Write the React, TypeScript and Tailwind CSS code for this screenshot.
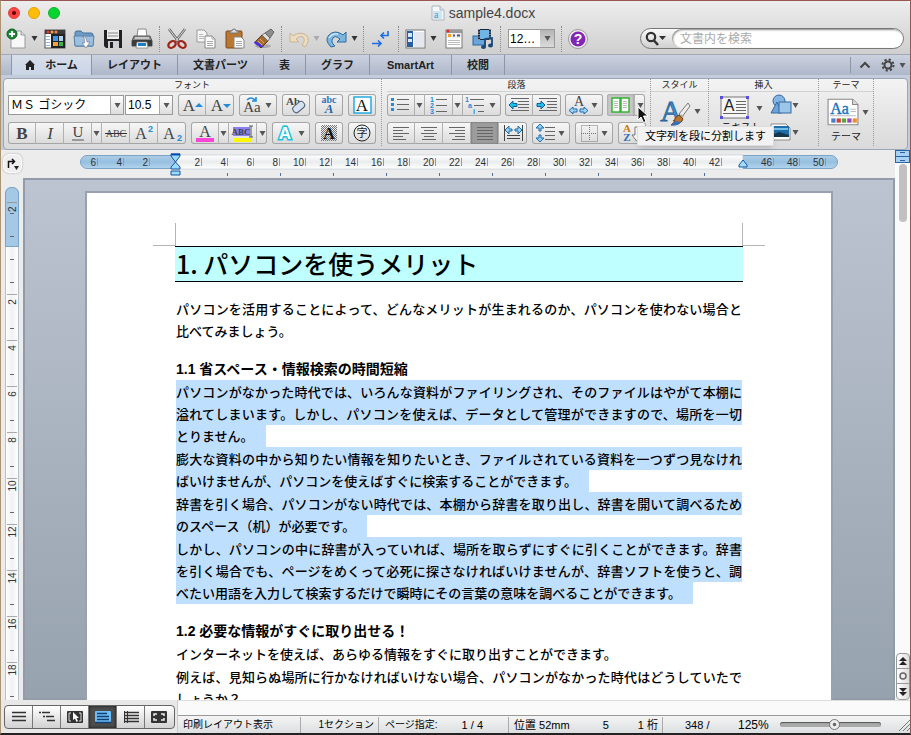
import React from "react";

type Kids = { children?: React.ReactNode };

const UI_FONT = "font-['Liberation_Sans','Noto_Sans_CJK_JP',sans-serif]";

const Arrow = ({ className = "text-[#555]" }: { className?: string }) => (
  <svg width="7" height="5" viewBox="0 0 7 5" className={`shrink-0 ${className}`}>
    <path d="M0.5 0H6.5L3.5 5Z" fill="currentColor" />
  </svg>
);

/* ---------- title bar and main toolbar ---------- */

const TitleBar = () => (
  <div className="relative flex h-6 items-center pl-[7px]">
    <div className="flex gap-2">
      <button aria-label="閉じる" className="flex size-3 items-center justify-center rounded-full border border-[#e0443e] bg-[#fc4447]">
        <span className="size-1 rounded-full bg-[#5a0000]" />
      </button>
      <button aria-label="しまう" className="size-3 rounded-full border border-[#e5a50a] bg-[#fdbc05]" />
      <button aria-label="拡大" className="size-3 rounded-full border border-[#12b32a] bg-[#06d52f]" />
    </div>
    <div className="flex flex-1 items-center justify-center gap-1 pr-[58px] pl-[54px]">
      <svg width="14" height="16" viewBox="0 0 14 16">
        <path d="M1 1H9L13 5V15H1Z" fill="#f7fafc" stroke="#a9b4bb" />
        <path d="M9 1V5H13" fill="#dfe7ec" stroke="#a9b4bb" />
        <rect x="2" y="6" width="9" height="8" fill="#cfe5f2" />
        <text x="3" y="13" fontSize="10" fontFamily="Liberation Serif, serif" fill="#4a9cc8">a</text>
      </svg>
      <h1 className="text-sm leading-5 text-[#444]">sample4.docx</h1>
    </div>
  </div>
);

const Tool = ({ label, children }: Kids & { label: string }) => (
  <button aria-label={label} className="flex h-7 w-[29px] shrink-0 items-center justify-center">
    <svg width="22" height="22" viewBox="0 0 22 22">{children}</svg>
  </button>
);

const More = ({ dim = false }: { dim?: boolean }) => (
  <button aria-label="その他" className="flex h-7 w-[9px] shrink-0 items-center">
    <Arrow className={dim ? "text-[#aaa]" : "text-[#333]"} />
  </button>
);

const Sep = () => (
  <div className="flex w-[6px] shrink-0 justify-center">
    <div className="h-[26px] border-l border-dotted border-[#8a8a8a]" />
  </div>
);

const Toolbar = () => (
  <div className="flex h-[29px] items-center pr-[6px] pb-[2px] pl-px">
    <Tool label="新規">
      <path d="M5 3H15L19 7V20H5Z" fill="#f8f8f8" stroke="#999" />
      <path d="M15 3V7H19" fill="#ddd" stroke="#999" />
      <circle cx="6" cy="6" r="5" fill="#1c8a35" stroke="#0c5a1c" />
      <path d="M6 3V9M3 6H9" stroke="#fff" strokeWidth="2" />
    </Tool>
    <More />
    <Tool label="テンプレート">
      <rect x="1" y="2" width="20" height="18" fill="#fff" stroke="#555" />
      <rect x="1" y="2" width="20" height="4" fill="#3b3b3b" />
      <circle cx="4" cy="4" r="1.5" fill="#e33" /><circle cx="8" cy="4" r="1.5" fill="#ea3" /><circle cx="12" cy="4" r="1.5" fill="#e85" />
      <path d="M2 8.500H6M2 11.500H6M2 14.500H6M2 17.500H6" stroke="#9cb3d0" />
      <rect x="7" y="6" width="14" height="14" fill="#222" />
      <rect x="9" y="8" width="5" height="5" fill="#3f97e8" /><rect x="15" y="8" width="4" height="5" fill="#a8d4f5" />
      <rect x="9" y="14" width="5" height="4" fill="#f3a43a" /><rect x="15" y="14" width="4" height="4" fill="#3cb44b" />
    </Tool>
    <Tool label="開く">
      <path d="M2 5Q2 3 4 3H8L10 5H18Q20 5 20 7V17Q20 18 19 18H3Q2 18 2 17Z" fill="#6f9cc4" stroke="#416f98" />
      <path d="M1 8H21L20 18H2Z" fill="#9cc0de" stroke="#5583ab" />
      <path d="M10 8Q14 9 14 14H17L13 20L9 15H11.500Q12 11 10 8Z" fill="#fff" stroke="#668" strokeWidth=".6" />
    </Tool>
    <Tool label="保存">
      <path d="M2 2H20V20H4L2 18Z" fill="#222" />
      <rect x="5" y="2" width="12" height="9" fill="#eee" />
      <path d="M6 5H16M6 8H16" stroke="#888" />
      <rect x="6" y="13" width="11" height="7" fill="#ccd0d4" /><rect x="8" y="14" width="3" height="6" fill="#222" />
    </Tool>
    <Tool label="プリント">
      <path d="M6 9L7 1H15L16 9Z" fill="#fff" stroke="#888" />
      <path d="M3 8H19L21 13V18H1V13Z" fill="#8c8c8c" stroke="#555" />
      <rect x="1" y="12" width="20" height="6" rx="1" fill="#3c3c3c" />
      <path d="M4 10H18" stroke="#ddd" strokeWidth="1.500" />
      <path d="M6 14H16L17 20H5Z" fill="#fff" stroke="#777" strokeWidth=".7" /><path d="M7 15H15V18H7Z" fill="#1b80c8" />
    </Tool>
    <Sep />
    <Tool label="カット">
      <path d="M3 1L13 14M19 1L9 14" stroke="#666" strokeWidth="2.600" />
      <path d="M3 1L13 14M19 1L9 14" stroke="#ddd" strokeWidth="1" />
      <ellipse cx="6" cy="16.500" rx="4" ry="3" transform="rotate(-35 6 16.500)" fill="none" stroke="#a02318" strokeWidth="2.200" />
      <ellipse cx="16" cy="16.500" rx="4" ry="3" transform="rotate(35 16 16.500)" fill="none" stroke="#a02318" strokeWidth="2.200" />
    </Tool>
    <Tool label="コピー">
      <path d="M2 2H9L12 5V14H2Z" fill="#f6f6f6" stroke="#999" /><path d="M4 6.500H8M4 8.500H9M4 10.500H9" stroke="#bbb" />
      <path d="M10 8H17L20 11V20H10Z" fill="#fafafa" stroke="#888" /><path d="M17 8V11H20M12 13.500H18M12 15.500H18M12 17.500H18" fill="none" stroke="#aaa" />
    </Tool>
    <Tool label="ペースト">
      <rect x="2" y="3" width="16" height="17" rx="1" fill="#b9772f" stroke="#7c4a15" />
      <path d="M6 5V3H8Q8 1 10 1Q12 1 12 3H14V5Z" fill="#ddd" stroke="#777" />
      <path d="M10 9H17L20 12V20H10Z" fill="#fafafa" stroke="#888" /><path d="M12 13.500H18M12 15.500H18M12 17.500H18" stroke="#aaa" />
    </Tool>
    <Tool label="書式のコピー">
      <ellipse cx="10" cy="18" rx="8" ry="2" fill="#aaa" />
      <path d="M2 14L8 20L15 13L9 7Z" fill="#a3692d" stroke="#5f3b14" />
      <path d="M2 13L1 15Q6 20 11 19L6 15Z" fill="#4a36d6" />
      <path d="M9 7L15 13L17 10L12 5Z" fill="#ddd" stroke="#777" />
      <path d="M12 5L18 1L21 4L17 10Z" fill="#8d8d8d" stroke="#666" />
      <path d="M5 13L9 17M7 11L11 15" stroke="#e0ae6d" />
    </Tool>
    <Sep />
    <Tool label="取り消し">
      <path d="M2 5V14H11L8 11Q12 7 15 9Q18 12 14 17L17 19Q23 12 18 7Q12 3 5 8Z" fill="#eddcc2" stroke="#c9b594" />
    </Tool>
    <More dim />
    <Tool label="やり直し">
      <path d="M20 4V14H11L14 11Q9 7 7 10Q4 14 9 18L5 19Q-2 12 3 7Q9 1 17 7Z" fill="#7db7e0" stroke="#2c6a9f" />
      <path d="M3 10Q6 5 12 6" stroke="#d5ecfb" fill="none" strokeWidth="1.300" />
    </Tool>
    <More />
    <Sep />
    <Tool label="編集記号">
      <path d="M18 3V7.500H11M14 4.500L11 7.500L14 10.500" fill="none" stroke="#1b6fe0" strokeWidth="1.600" />
      <path d="M2 15.500H11M8 12.500L11 15.500L8 18.500" fill="none" stroke="#1b6fe0" strokeWidth="1.600" />
    </Tool>
    <Sep />
    <Tool label="サイドバー">
      <rect x="1" y="2" width="19" height="18" fill="#fff" stroke="#777" />
      <rect x="2" y="3" width="6" height="16" fill="#2a5ea4" />
      <path d="M3 5H7V9H3ZM3 11H7V14H3Z" fill="#d8e8fa" /><rect x="9" y="4" width="10" height="15" fill="#e4e7f0" />
    </Tool>
    <More />
    <Tool label="ツールボックス">
      <rect x="3" y="2" width="16" height="18" fill="#fff" stroke="#777" />
      <rect x="3" y="2" width="16" height="3" fill="#999" /><circle cx="5" cy="3" r="1.500" fill="#e22" />
      <rect x="4" y="5" width="14" height="5" fill="#eee" /><rect x="5" y="6" width="3" height="3" fill="#f4a020" />
      <path d="M10 7.500H12M14 7.500H17" stroke="#558" strokeWidth="2" />
      <path d="M5 12.500H17M5 14.500H17M5 16.500H17" stroke="#bbb" />
    </Tool>
    <Tool label="メディア">
      <rect x="1" y="8" width="12" height="9" fill="#69a5da" stroke="#2b659e" />
      <rect x="6" y="1" width="13" height="11" fill="#182433" /><rect x="8" y="2" width="9" height="9" fill="#6fb5e6" />
      <path d="M7 1V12M18 1V12" stroke="#fff" strokeDasharray="1 1.500" />
      <path d="M13 19V11L20 10V17" fill="none" stroke="#1c4878" strokeWidth="1.800" />
      <ellipse cx="11.500" cy="19" rx="2.500" ry="2" fill="#1c4878" /><ellipse cx="18.500" cy="17.500" rx="2.500" ry="2" fill="#1c4878" />
    </Tool>
    <Sep />
    <div className="relative mr-[3px] ml-[5px] shrink-0">
      <select aria-label="ズーム" className="block h-[19px] w-[47px] appearance-none border border-[#999] bg-white pl-px text-xs leading-4 text-black">
        <option>12…</option>
      </select>
      <span className="pointer-events-none absolute top-px right-px flex h-[17px] w-[14px] items-center justify-center bg-gradient-to-b from-[#b5b5b5] to-[#dadada]"><Arrow /></span>
    </div>
    <Sep />
    <Tool label="ヘルプ">
      <circle cx="10" cy="11" r="9.500" fill="#eee" stroke="#999" />
      <circle cx="10" cy="11" r="7.500" fill="#8226b5" />
      <text x="10" y="16" textAnchor="middle" fontSize="14" fontWeight="700" fontFamily="Liberation Sans, sans-serif" fill="#fff">?</text>
    </Tool>
    <div className="ml-auto flex h-[21px] w-[264px] overflow-hidden rounded-full border border-[#777] bg-gradient-to-b from-[#fafafa] to-[#d0d0d0]">
      <button aria-label="検索オプション" className="flex w-[31px] shrink-0 items-center pl-1">
        <svg width="22" height="16" viewBox="0 0 22 16">
          <circle cx="6" cy="6" r="4.200" fill="none" stroke="#333" strokeWidth="2.200" />
          <path d="M9 9.500L13 14" stroke="#333" strokeWidth="2.600" /><path d="M14 5H21L17.500 9Z" fill="#333" />
        </svg>
      </button>
      <input type="search" aria-label="文書内を検索" placeholder="文書内を検索" className="min-w-0 flex-1 rounded-full bg-white pl-2 text-xs shadow-[inset_1px_1px_2px_#888] outline-none placeholder:text-[#aaa]" />
    </div>
  </div>
);

/* ---------- ribbon tabs ---------- */

const TABS = [
  { name: "レイアウト", width: "w-[86px]" },
  { name: "文書パーツ", width: "w-[86px]" },
  { name: "表", width: "w-[42px]" },
  { name: "グラフ", width: "w-[64px]" },
  { name: "SmartArt", width: "w-[82px]" },
  { name: "校閲", width: "w-[53px]" },
];

const Tabs = () => (
  <nav className="flex h-[21px] border-t border-[#a3a8b2] bg-gradient-to-b from-[#cbd1df] to-[#aeb7c9] text-[11px] leading-5 font-bold text-[#222]">
    <div className="w-[11px] border-r border-[#8d96a6]" />
    <button className="flex w-20 items-center justify-center gap-[10px] border-r border-[#8d96a6] bg-gradient-to-b from-[#d8dfeb] to-[#c9d4e5]">
      <svg width="10" height="10" viewBox="0 0 10 10"><path d="M5 0L10 5H9V10H6V7H4V10H1V5H0Z" fill="#222" /></svg>
      ホーム
    </button>
    {TABS.map((t) => (
      <button key={t.name} className={`${t.width} border-r border-[#8d96a6]`}>{t.name}</button>
    ))}
    <div className="ml-auto flex items-center">
      <div className="h-4 border-l border-[#8d96a6]" />
      <button aria-label="リボンを隠す" className="ml-2">
        <svg width="12" height="8" viewBox="0 0 12 8"><path d="M1.500 6.500L6 2L10.500 6.500" fill="none" stroke="#444" strokeWidth="2" /></svg>
      </button>
      <button aria-label="リボンの設定" className="mr-1 ml-[10px] flex items-center gap-1">
        <svg width="14" height="14" viewBox="0 0 14 14">
          <circle cx="7" cy="7" r="3.500" fill="none" stroke="#444" strokeWidth="2" />
          <circle cx="7" cy="7" r="5.500" fill="none" stroke="#444" strokeWidth="2" strokeDasharray="2.200 2.120" />
        </svg>
        <Arrow />
      </button>
    </div>
  </nav>
);

/* ---------- ribbon ---------- */

const Group = ({ title, className = "", children }: Kids & { title: string; className?: string }) => (
  <section className={`shrink-0 border-r border-dotted border-[#999] ${className}`}>
    <h2 className="mb-[2px] h-[13px] border-b border-[#d2d2d2] text-center text-[9px] leading-3 text-[#222]">{title}</h2>
    {children}
  </section>
);

const Bar = ({ children }: Kids) => (
  <div className="flex h-[22px] shrink-0 overflow-hidden rounded-[3px] bg-gradient-to-b from-[#f8f8f8] to-[#dadada] shadow-[inset_0_0_0_1px_#a5a5a5]">
    {children}
  </div>
);

const Btn = ({ label, tone = "", children }: Kids & { label: string; tone?: string }) => (
  <button aria-label={label} className={`flex w-7 items-center justify-center border-r border-[#b0b0b0] last:border-r-0 ${tone}`}>
    <svg width="26" height="20" viewBox="0 0 26 20">{children}</svg>
  </button>
);

const Drop = () => (
  <button aria-label="メニュー" className="flex w-[10px] items-center justify-center border-r border-[#b0b0b0] last:border-r-0"><Arrow /></button>
);

const Wide = ({ label, children }: Kids & { label: string }) => (
  <button aria-label={label} className="flex w-[38px] items-center justify-center gap-px pr-1">
    <svg width="24" height="20" viewBox="0 0 24 20">{children}</svg>
    <Arrow />
  </button>
);

const Glyph = ({ x = 13, y = 16, size = 17, fill = "#444", bold = false, italic = false, children }: Kids & { x?: number; y?: number; size?: number; fill?: string; bold?: boolean; italic?: boolean }) => (
  <text x={x} y={y} fontSize={size} fill={fill} textAnchor="middle" fontFamily="Liberation Serif, serif" fontWeight={bold ? 700 : 400} fontStyle={italic ? "italic" : "normal"}>
    {children}
  </text>
);

const Combo = ({ label, value, className }: { label: string; value: string; className: string }) => (
  <div className={`relative shrink-0 ${className}`}>
    <select aria-label={label} className="block h-5 w-full appearance-none border border-[#999] bg-white pl-[2px] text-xs leading-4 text-black">
      <option>{value}</option>
    </select>
    <span className="pointer-events-none absolute top-px right-px flex h-[18px] w-[13px] items-center justify-center border-l border-[#aaa] bg-gradient-to-b from-white to-[#ddd]"><Arrow /></span>
  </div>
);

const Rows = ({ d, stroke = "#666" }: { d: string; stroke?: string }) => <path d={d} stroke={stroke} fill="none" strokeWidth="1" />;

const FontGroup = () => (
  <Group title="フォント" className="pr-[5px] pl-1">
    <div className="flex items-center gap-[5px]">
      <div className="flex gap-px">
        <Combo label="フォント名" value="ＭＳ ゴシック" className="w-[116px]" />
        <Combo label="フォントサイズ" value="10.5" className="w-12" />
      </div>
      <Bar>
        <Btn label="拡大"><Glyph x={10}>A</Glyph><path d="M16 12H24L20 8Z" fill="#258bd8" /></Btn>
        <Btn label="縮小"><Glyph x={10}>A</Glyph><path d="M16 9H24L20 13Z" fill="#258bd8" /></Btn>
      </Bar>
      <Bar>
        <Wide label="文字種の変換"><Glyph x={12} y={17} size={15}>Aa</Glyph><path d="M7 5Q11 1 15 5M16 2V6H12" fill="none" stroke="#258bd8" strokeWidth="1.600" /></Wide>
      </Bar>
      <Bar>
        <Btn label="書式のクリア">
          <Glyph x={10} y={10} size={11} bold>Ab</Glyph>
          <rect x="9" y="9" width="13" height="7" rx="3" transform="rotate(-40 15 12)" fill="#d7e3f2" stroke="#567" />
        </Btn>
      </Bar>
      <Bar>
        <Btn label="ルビ"><Glyph y={8} size={10} bold fill="#2c74b8">abc</Glyph><Glyph y={18} size={13} bold italic fill="#2b65a3">A</Glyph></Btn>
      </Bar>
      <Bar>
        <Btn label="囲み線"><rect x="5" y="2" width="17" height="16" fill="#fff" stroke="#18a5df" strokeWidth="1.400" /><Glyph size={17} fill="#111">A</Glyph></Btn>
      </Bar>
    </div>
    <div className="mt-[6px] flex gap-[5px]">
      <Bar>
        <Btn label="太字"><Glyph bold>B</Glyph></Btn>
        <Btn label="斜体"><Glyph italic>I</Glyph></Btn>
        <Btn label="下線"><Glyph y={14} size={15}>U</Glyph><path d="M7 17H19" stroke="#555" /></Btn>
        <Drop />
        <Btn label="取り消し線"><Glyph y={14} size={10}>ABC</Glyph><path d="M2 10.500H24" stroke="#333" /></Btn>
        <Btn label="上付き"><Glyph x={10} size={16}>A</Glyph><text x="17" y="9" fontSize="9" fontWeight="700" fill="#258bd8">2</text></Btn>
        <Btn label="下付き"><Glyph x={10} size={16}>A</Glyph><text x="18" y="18" fontSize="9" fontWeight="700" fill="#258bd8">2</text></Btn>
      </Bar>
      <Bar>
        <Btn label="文字の色"><Glyph y={14} size={16}>A</Glyph><rect x="4" y="15" width="18" height="4" fill="#f845d8" /></Btn>
        <Drop />
        <Btn label="蛍光ペン"><rect x="3" y="4" width="17" height="9" fill="#8880ee" /><Glyph x={11} y={12} size={9} bold>ABC</Glyph><path d="M21 3V14M19 3H23M19 14H23" stroke="#555" /><rect x="4" y="15" width="18" height="4" fill="#fcf800" /></Btn>
        <Drop />
      </Bar>
      <Bar>
        <Wide label="文字の効果">
          <text x="12" y="16" textAnchor="middle" fontSize="17" fontWeight="700" fill="#fff" stroke="#19c3dd" strokeWidth="3" paintOrder="stroke">A</text>
        </Wide>
      </Bar>
      <Bar>
        <Btn label="網かけ">
          <pattern id="dither" width="2" height="2" patternUnits="userSpaceOnUse"><rect width="1" height="1" fill="#777" /><rect x="1" y="1" width="1" height="1" fill="#777" /></pattern>
          <rect x="5" y="2" width="16" height="16" fill="url(#dither)" /><Glyph size={16} bold fill="#111">A</Glyph>
        </Btn>
      </Bar>
      <Bar>
        <Btn label="囲い文字"><circle cx="13" cy="10" r="8" fill="none" stroke="#222" /><text x="13" y="14" textAnchor="middle" fontSize="11" fill="#222">字</text></Btn>
      </Bar>
    </div>
  </Group>
);

const SIDE_ARROW = "M0 4L4 0V2.500H8V5.500H4V8Z";

const Tooltip = () => (
  <>
    <div role="tooltip" className="absolute top-8 left-[30px] z-20 border border-[#ddd] bg-[#f2f2f2] px-[7px] py-px text-[11px] leading-4 whitespace-nowrap text-black shadow-md">文字列を段に分割します</div>
    <svg width="13" height="18" viewBox="0 0 13 18" className="absolute top-3 left-[30px] z-30">
      <path d="M1 1V14L4 11L6.500 16.500L9 15.500L6.500 10H11Z" fill="#111" stroke="#fff" />
    </svg>
  </>
);

const ParagraphGroup = () => (
  <Group title="段落" className="pr-1 pl-[5px]">
    <div className="flex gap-1">
      <Bar>
        <Btn label="箇条書き"><path d="M3 3H6V6H3ZM3 8H6V11H3ZM3 13H6V16H3Z" fill="#258bd8" /><Rows d="M9 4.500H21M9 9.500H21M9 14.500H21" /></Btn>
        <Drop />
        <Btn label="段落番号">
          <g fontSize="7" fontWeight="700" fill="#258bd8"><text x="4" y="7">1</text><text x="4" y="13">2</text><text x="4" y="19">3</text></g>
          <Rows d="M10 4.500H21M10 10.500H21M10 16.500H21" />
        </Btn>
        <Drop />
        <Wide label="アウトライン">
          <g fontSize="7" fontWeight="700" fill="#258bd8"><text x="1" y="7">1</text><text x="4" y="13">a</text><text x="9" y="19">i</text></g>
          <Rows d="M6 4.500H20M10 10.500H20M14 16.500H20" />
        </Wide>
      </Bar>
      <Bar>
        <Btn label="インデント解除"><Rows d="M5 3.500H23M12 6.500H23M12 9.500H23M12 12.500H23M5 15.500H23" /><path transform="translate(3 6)" d={SIDE_ARROW} fill="#1cc0ea" stroke="#105f9c" /></Btn>
        <Btn label="インデント"><Rows d="M5 3.500H23M13 6.500H23M13 9.500H23M13 12.500H23M5 15.500H23" /><path transform="translate(11 6) scale(-1 1)" d={SIDE_ARROW} fill="#1cc0ea" stroke="#105f9c" /></Btn>
      </Bar>
      <Bar>
        <Wide label="拡張書式">
          <Glyph x={13} y={11} size={14}>A</Glyph>
          <path d="M3 15.500L7 12V14H11V17H7V19ZM22 15.500L18 12V14H14V17H18V19Z" fill="#9fd3f5" stroke="#1f6cae" />
        </Wide>
      </Bar>
      <div className="relative">
        <Bar>
          <Btn label="段組み" tone="bg-[#c6c6c6] shadow-[inset_0_0_2px_#777]">
            <rect x="4" y="3" width="8" height="14" fill="#fff" stroke="#2bb02b" strokeWidth="1.400" /><rect x="13" y="3" width="8" height="14" fill="#fff" stroke="#2bb02b" strokeWidth="1.400" />
            <Rows stroke="#bbb" d="M6 6.500H10M6 8.500H10M6 10.500H10M6 12.500H10M15 6.500H19M15 8.500H19M15 10.500H19M15 12.500H19" />
          </Btn>
          <Drop />
        </Bar>
        <Tooltip />
      </div>
    </div>
    <div className="mt-[6px] flex gap-[5px]">
      <Bar>
        <Btn label="左揃え"><Rows d="M5 4.500H21M5 7.500H15M5 10.500H21M5 13.500H15M5 16.500H18" /></Btn>
        <Btn label="中央揃え"><Rows d="M5 4.500H21M8 7.500H18M5 10.500H21M8 13.500H18M6 16.500H20" /></Btn>
        <Btn label="右揃え"><Rows d="M5 4.500H21M11 7.500H21M5 10.500H21M11 13.500H21M8 16.500H21" /></Btn>
        <Btn label="両端揃え" tone="bg-[#9c9c9c] shadow-[inset_0_0_2px_#555]"><Rows d="M5 4.500H21M5 7.500H21M5 10.500H21M5 13.500H21M5 16.500H21" /></Btn>
        <Btn label="均等割り付け">
          <Rows d="M4.500 2V18M22.500 2V18M7 12.500H20M7 15.500H20" stroke="#444" />
          <path d="M5 7L9 3V6H12V8H9V11ZM22 7L18 3V6H15V8H18V11Z" fill="#8fd0f5" stroke="#1f6cae" />
        </Btn>
      </Bar>
      <Bar>
        <Wide label="行間">
          <path d="M7 1L11 5H8V8H6V5H3ZM7 19L11 15H8V12H6V15H3Z" fill="#8fd0f5" stroke="#1f6cae" />
          <Rows d="M12 4.500H22M12 8.500H22M12 12.500H22M12 16.500H22" />
        </Wide>
      </Bar>
      <Bar>
        <Wide label="罫線"><path d="M5.500 2.500H21.500V18.500H5.500ZM13.500 2V18M5 10.500H21" fill="none" stroke="#777" strokeDasharray="1 1" /></Wide>
      </Bar>
      <Bar>
        <Btn label="並べ替え">
          <Glyph x={8} y={9} size={11} bold fill="#cc7a10">A</Glyph><Glyph x={8} y={18} size={11} bold fill="#2d6db5">Z</Glyph>
          <path d="M16 4H19V12H22L17.500 18L13 12H16Z" fill="#fff" stroke="#777" />
        </Btn>
      </Bar>
    </div>
  </Group>
);

const Ribbon = () => (
  <div className="bg-[#c3ccdb] px-[2px] pt-[3px]">
    <div className="flex h-[72px] overflow-visible rounded-[4px] border border-[#9ba6b7] bg-gradient-to-b from-[#f3f3f3] via-[#e6e6e6] to-[#dadada] pb-[3px]">
      <FontGroup />
      <ParagraphGroup />
      <Group title="スタイル" className="w-[58px]">
        <button aria-label="スタイル" className="flex items-center gap-[2px] pl-2">
          <svg width="33" height="34" viewBox="0 0 33 34">
            <text x="12" y="27" textAnchor="middle" fontSize="30" fontFamily="Liberation Serif, serif" fill="#3f90cf" stroke="#27649c" strokeWidth=".8">A</text>
            <path d="M29 9L20 20L23 23L31 12Z" fill="#eee" stroke="#777" />
            <path d="M22 20L25 23L22 25L20 22Z" fill="#aaa" />
            <path d="M20 21L24 25Q22 31 12 31Q17 28 16 24Z" fill="#bb762c" stroke="#6e4214" /><path d="M12 31Q18 33 22 28L17 27Z" fill="#3470c0" />
          </svg>
          <Arrow />
        </button>
      </Group>
      <Group title="挿入" className="w-[110px]">
        <div className="flex pl-[10px]">
          <div className="w-[51px]">
            <button className="text-[10px] leading-3">
              <span className="flex h-7 items-center gap-[5px]">
                <svg width="32" height="26" viewBox="0 0 32 26">
                  <rect x="2" y="2" width="27" height="21" fill="#f5f5f5" stroke="#777" />
                  <text x="10" y="16" textAnchor="middle" fontSize="16" fill="#222" fontFamily="Liberation Sans">A</text>
                  <Rows d="M17 6.500H27M17 9.500H27M17 12.500H27M17 15.500H27M4 18.500H27" />
                  <path d="M1 1H4V4H1ZM27 1H30V4H27ZM1 21H4V24H1ZM27 21H30V24H27Z" fill="#5550e0" />
                </svg>
                <Arrow />
              </span>
              テキスト
            </button>
          </div>
          <div className="flex flex-col gap-[7px]">
            <button aria-label="図形" className="flex items-center">
              <svg width="22" height="22" viewBox="0 0 22 22">
                <circle cx="9" cy="7" r="6" fill="#84b6e4" stroke="#34699f" /><path d="M1 19L7 8L12 19Z" fill="#6ca3d8" stroke="#34699f" /><rect x="9" y="8" width="12" height="11" fill="#9cc5ea" stroke="#34699f" />
              </svg>
              <Arrow />
            </button>
            <button aria-label="写真" className="flex items-center">
              <svg width="22" height="18" viewBox="0 0 22 18">
                <path d="M1 1H16L20 5V17H1Z" fill="#fff" stroke="#888" /><rect x="2" y="3" width="17" height="11" fill="#1f6ea8" /><path d="M2 12L9 9L19 12V14H2Z" fill="#15384f" /><path d="M2 5H18V7H2Z" fill="#78bde8" />
              </svg>
              <Arrow />
            </button>
          </div>
        </div>
      </Group>
      <Group title="テーマ" className="w-[55px]">
        <button className="w-full text-[10px] leading-3 text-[#222]">
          <span className="flex h-9 items-center gap-[3px] pl-2">
            <svg width="32" height="28" viewBox="0 0 30 26">
              <path d="M1 1H24L29 6V25H1Z" fill="#fff" stroke="#888" /><path d="M24 1V6H29" fill="#ddd" stroke="#888" />
              <text x="3" y="15" fontSize="15" fontFamily="Liberation Serif, serif" fill="#2175bd" stroke="#2175bd" strokeWidth=".4">Aa</text>
              <path d="M22 10.500H27M22 12.500H27M3 16.500H27" stroke="#bbb" />
              <rect x="4" y="19" width="4" height="4" fill="#4a80c8" /><rect x="9" y="19" width="4" height="4" fill="#d04040" /><rect x="14" y="19" width="4" height="4" fill="#5aa83c" /><rect x="19" y="19" width="4" height="4" fill="#8e4cc0" /><rect x="24" y="19" width="4" height="4" fill="#ea9030" />
            </svg>
            <Arrow />
          </span>
          <span className="block pt-px">テーマ</span>
        </button>
      </Group>
    </div>
  </div>
);

/* ---------- rulers ---------- */

const RULER_MARKS = [-6, -4, -2, 2, 4, 6, 8, 10, 12, 14, 16, 18, 20, 22, 24, 26, 28, 30, 32, 34, 36, 38, 40, 42, 46, 48, 50];
const TAB_STOPS = [1, 2, 3, 4, 5, 6, 7, 8, 9, 10];

const Ruler = () => (
  <svg width="758" height="28" viewBox="0 0 758 28" className="shrink-0">
    <defs>
      <linearGradient id="rulerBlue" x2="0" y2="1"><stop stopColor="#aecde6" /><stop offset=".5" stopColor="#96c0e0" /><stop offset="1" stopColor="#b2d4ed" /></linearGradient>
      <linearGradient id="rulerWhite" x2="0" y2="1"><stop stopColor="#fff" /><stop offset=".5" stopColor="#e9eced" /><stop offset="1" stopColor="#fff" /></linearGradient>
    </defs>
    <rect x=".5" y="5.500" width="757" height="13" rx="6.500" fill="url(#rulerBlue)" stroke="#7ba3c4" />
    <rect x="95" y="5" width="568" height="14" fill="url(#rulerWhite)" stroke="#b3bdc5" strokeWidth=".5" />
    {RULER_MARKS.map((n) => (
      <g key={n}>
        <path d={`M${95 + n * 13}.5 8V16`} stroke="#999" />
        <text x={94 + n * 13} y="16" textAnchor="end" fontSize="10" fill="#333">{Math.abs(n)}</text>
      </g>
    ))}
    {TAB_STOPS.map((n) => <path key={n} d={`M${94 + n * 53}.5 23V26`} stroke="#527199" />)}
    <path d="M91 4H100V6L95.500 12L91 6ZM95.500 12L100 17V19H91V17ZM91 21H100V25H91Z" fill="#9bdcfc" stroke="#1554a0" />
    <path d="M91 4.500H100" stroke="#0d4eb0" strokeWidth="2" />
    <path d="M663 10L667 15V17H659V15Z" fill="#a5dcf8" stroke="#1554a0" />
  </svg>
);

const SideRuler = () => (
  <svg width="14" height="620" viewBox="0 0 14 620" className="mx-auto">
    <defs><linearGradient id="sideWhite"><stop stopColor="#fff" /><stop offset=".5" stopColor="#f0f1f2" /><stop offset="1" stopColor="#fff" /></linearGradient></defs>
    <rect x=".5" y=".5" width="13" height="640" rx="6" fill="url(#sideWhite)" stroke="#b7c1cb" />
    <path d="M.5 59.500V7Q.5 .5 7 .5Q13.500 .5 13.500 7V59.500Z" fill="#a3c9e6" stroke="#7ba3c4" />
    <path d="M2 15.500H12" stroke="#999" />
    <path d="M5 26.500H9M5 49.500H9M5 72.500H9M5 95.500H9" stroke="#666" />
    <text transform="translate(11 25) rotate(-90)" fontSize="10" fill="#333">2</text>
    {[1, 2, 3, 4, 5, 6, 7, 8, 9].map((n) => (
      <g key={n}>
        <path d={`M5 ${95 + n * 46}.5H9`} stroke="#666" />
        <path d={`M2 ${61 + n * 46}.5H12`} stroke="#aaa" />
        <text transform={`translate(11 ${69 + n * 46}) rotate(-90)`} textAnchor="middle" fontSize="10" fill="#333">{n * 2}</text>
      </g>
    ))}
  </svg>
);

/* ---------- document ---------- */

const SELECTED = [
  "パソコンがなかった時代では、いろんな資料がファイリングされ、そのファイルはやがて本棚に溢れてしまいます。しかし、パソコンを使えば、データとして管理ができますので、場所を一切とりません。",
  "膨大な資料の中から知りたい情報を知りたいとき、ファイルされている資料を一つずつ見なければいけませんが、パソコンを使えばすぐに検索することができます。",
  "辞書を引く場合、パソコンがない時代では、本棚から辞書を取り出し、辞書を開いて調べるためのスペース（机）が必要です。",
  "しかし、パソコンの中に辞書が入っていれば、場所を取らずにすぐに引くことができます。辞書を引く場合でも、ページをめくって必死に探さなければいけませんが、辞書ソフトを使うと、調べたい用語を入力して検索するだけで瞬時にその言葉の意味を調べることができます。",
];

const SectionTitle = ({ children }: Kids) => (
  <h3 className="font-['Liberation_Sans','Noto_Sans_CJK_JP',sans-serif] text-sm leading-[22px] font-bold">{children}</h3>
);

const Page = () => (
  <article lang="ja" className="min-h-[900px] w-[744px] shrink-0 bg-white px-[66px] pt-[30px] text-[13px] leading-[22px] font-medium text-black shadow-[0_0_0_2px_#98a1af]">
    <div className="flex h-[23px] justify-between">
      <div className="w-[23px] border-r border-b border-[#b5b5b5]" />
      <div className="w-[23px] border-b border-l border-[#b5b5b5]" />
    </div>
    <div className="mx-[22px]">
      <h2 className="border-y border-black bg-[#bfffff] pb-[2px] pl-px font-['Noto_Sans_CJK_JP',sans-serif] text-[25px] leading-8">1. パソコンを使うメリット</h2>
      <p className="mt-4 px-px text-justify">パソコンを活用することによって、どんなメリットが生まれるのか、パソコンを使わない場合と比べてみましょう。</p>
      <section className="mt-4 flex flex-col gap-px px-px text-justify">
        <SectionTitle>1.1 省スペース・情報検索の時間短縮</SectionTitle>
        {SELECTED.map((text) => (
          <p key={text}><span className="bg-[#bfdfff] py-[2px] pr-3">{text}</span></p>
        ))}
      </section>
      <section className="mt-4 flex flex-col gap-px px-px text-justify">
        <SectionTitle>1.2 必要な情報がすぐに取り出せる！</SectionTitle>
        <p>インターネットを使えば、あらゆる情報をすぐに取り出すことができます。</p>
        <p>例えば、見知らぬ場所に行かなければいけない場合、パソコンがなかった時代はどうしていたでしょうか？</p>
      </section>
    </div>
  </article>
);

const Scrollbar = () => (
  <div className="flex w-[15px] shrink-0 flex-col items-center bg-[#fafafa]">
    <button aria-label="分割" className="flex h-[13px] w-full flex-col justify-around border border-[#2b62a3] bg-[#a9d2f2] px-1">
      <span className="h-px bg-[#2b62a3]" /><span className="-mx-1 h-px bg-[#2b62a3]" /><span className="h-px bg-[#2b62a3]" />
    </button>
    <div className="mt-px h-[58px] w-2 rounded-full bg-[#c1c1c1]" />
    <div className="mt-auto flex w-[14px] flex-col divide-y divide-[#999] rounded-[4px] border border-[#999] bg-gradient-to-r from-white to-[#ddd]">
      <button aria-label="前のページ" className="flex h-[15px] items-center justify-center"><svg width="8" height="9" viewBox="0 0 8 9"><path d="M4 0L8 4H0ZM4 4L8 8H0Z" fill="#222" /></svg></button>
      <button aria-label="オブジェクトの選択" className="flex h-[15px] items-center justify-center"><svg width="8" height="8" viewBox="0 0 8 8"><circle cx="4" cy="4" r="3" fill="#eee" stroke="#666" strokeWidth="1.500" /></svg></button>
      <button aria-label="次のページ" className="flex h-[15px] items-center justify-center"><svg width="8" height="9" viewBox="0 0 8 9"><path d="M0 1H8L4 5ZM0 5H8L4 9Z" fill="#222" /></svg></button>
    </div>
  </div>
);

const Workspace = () => (
  <main className="flex min-h-0 flex-1 bg-[#ececec]">
    <div className="flex min-w-0 flex-1 flex-col">
      <div className="flex h-7 shrink-0">
        <div className="w-[22px] shrink-0 pt-[5px] pl-[3px]">
          <button aria-label="タブの種類" className="flex size-[17px] items-center justify-center rounded-[5px] bg-[#eee] shadow-[0_0_0_1px_#fff,0_0_2px_1px_#999]">
            <svg width="14" height="14" viewBox="0 0 14 14"><path d="M2.500 11V4.500H8M6 2L8.500 4.500L6 7" fill="none" stroke="#111" strokeWidth="1.500" /><path d="M8 9H13L10.500 13Z" fill="#222" /></svg>
          </button>
        </div>
        <div className="flex min-w-0 flex-1 justify-center overflow-hidden"><Ruler /></div>
      </div>
      <div className="flex min-h-0 flex-1">
        <div className="w-[22px] shrink-0 overflow-hidden pt-[9px]"><SideRuler /></div>
        <div className="flex min-w-0 flex-1 items-start justify-center overflow-hidden bg-gradient-to-b from-[#bdc4d1] to-[#96a2ae] pt-[15px] font-['Noto_Sans_CJK_JP',sans-serif] shadow-[inset_0_0_0_2px_#939ba9]">
          <Page />
        </div>
      </div>
    </div>
    <Scrollbar />
  </main>
);

/* ---------- footer ---------- */

const View = ({ label, on = false, children }: Kids & { label: string; on?: boolean }) => (
  <button aria-label={label} className={`flex w-7 items-center justify-center border-r border-[#777] last:border-r-0 ${on ? "bg-[#4c4c4c] shadow-[inset_0_0_3px_#111]" : ""}`}>
    <svg width="18" height="14" viewBox="0 0 18 14">{children}</svg>
  </button>
);

const Footer = () => (
  <footer className="flex h-[33px] shrink-0 bg-[#e8e8e8] text-black">
    <div className="w-[177px] shrink-0 border-r border-[#ccc] pt-[5px] pl-[3px]">
      <div className="flex h-6 w-[171px] overflow-hidden rounded-[4px] border border-[#666] bg-gradient-to-b from-white to-[#d2d2d2]">
        <View label="下書き"><path d="M2 2.500H16M2 6.500H16M2 10.500H16" stroke="#333" strokeWidth="1.600" /></View>
        <View label="アウトライン"><path d="M1 2.500H3M4 2.500H12M5 6.500H7M8 6.500H16M9 10.500H17" stroke="#333" strokeWidth="1.600" /></View>
        <View label="発行"><rect x="1" y="1" width="16" height="12" rx="1" fill="#333" /><path d="M5 3H3V11H5M13 3H15V11H13" fill="none" stroke="#ddd" /><path d="M7 2V10L9 8.500L10.500 12L12 11L10.500 8H13Z" fill="#fff" /></View>
        <View label="印刷レイアウト" on><rect x="1" y="1" width="16" height="12" rx="1" fill="#6cbcf7" /><path d="M3 3.500H13M3 6.500H15M3 9.500H15M1 12.500H17" stroke="#123f6b" strokeWidth="1.300" /></View>
        <View label="ノート"><path d="M2 2.500H17M2 5.500H17M2 8.500H17M2 11.500H17" stroke="#333" strokeWidth="1.600" /><path d="M5.500 1V13M2.500 1V13" stroke="#333" /></View>
        <View label="全画面"><rect x="1" y="1" width="16" height="12" rx="1" fill="#333" /><path d="M4 6V4H7M11 4H14V6M14 8V10H11M7 10H4V8" fill="none" stroke="#eee" strokeWidth="1.500" /></View>
      </div>
    </div>
    <div className="flex min-w-0 flex-1 flex-col">
      <div className="h-[15px] border-t border-[#ddd] bg-[#fafafa]" />
      <div className="flex h-[18px] items-center border-t border-[#999] bg-gradient-to-b from-[#f5f5f5] to-[#dcdfe0] text-[11px] leading-4 whitespace-nowrap">
        <span className="w-[123px] border-r border-[#aaa] pl-[5px] text-[10px]">印刷レイアウト表示</span>
        <span className="w-[78px] border-r border-[#aaa] pr-1 text-right text-[10px]">1セクション</span>
        <span className="flex w-[130px] gap-6 border-r border-[#aaa] pl-[6px]"><span className="text-[10px]">ページ指定:</span><span>1 / 4</span></span>
        <span className="flex w-[154px] justify-between border-r border-[#aaa] pr-1 pl-[5px]"><span>位置 52mm</span><span className="pl-1">5</span><span>1 桁</span></span>
        <span className="w-[75px] pl-[22px]">348 /</span>
        <span className="w-[42px] text-xs">125%</span>
        <input type="range" aria-label="表示倍率" min={0} max={100} defaultValue={54} className="h-3 w-[101px] appearance-none bg-transparent [&::-webkit-slider-runnable-track]:h-[5px] [&::-webkit-slider-runnable-track]:rounded-full [&::-webkit-slider-runnable-track]:bg-[#aaa] [&::-webkit-slider-runnable-track]:shadow-[inset_0_1px_1px_#555] [&::-webkit-slider-thumb]:-mt-[3px] [&::-webkit-slider-thumb]:size-[11px] [&::-webkit-slider-thumb]:appearance-none [&::-webkit-slider-thumb]:rounded-full [&::-webkit-slider-thumb]:border [&::-webkit-slider-thumb]:border-[#777] [&::-webkit-slider-thumb]:bg-[radial-gradient(circle,#666_20%,#eee_35%)]" />
        <svg width="12" height="12" viewBox="0 0 12 12" className="ml-auto"><path d="M1 12L12 1M5 12L12 5M9 12L12 9" stroke="#777" /></svg>
      </div>
    </div>
  </footer>
);

const App = () => (
  <div className={`flex h-screen w-full flex-col overflow-hidden border-x border-t border-b-2 border-t-[#9b5555] border-r-[#8b5a5c] border-b-[#252022] border-l-[#aa9473] ${UI_FONT}`}>
    <header className="rounded-t-[4px] bg-gradient-to-b from-[#ededed] to-[#cfcfcf]">
      <TitleBar />
      <Toolbar />
    </header>
    <Tabs />
    <Ribbon />
    <Workspace />
    <Footer />
  </div>
);

export default App;
